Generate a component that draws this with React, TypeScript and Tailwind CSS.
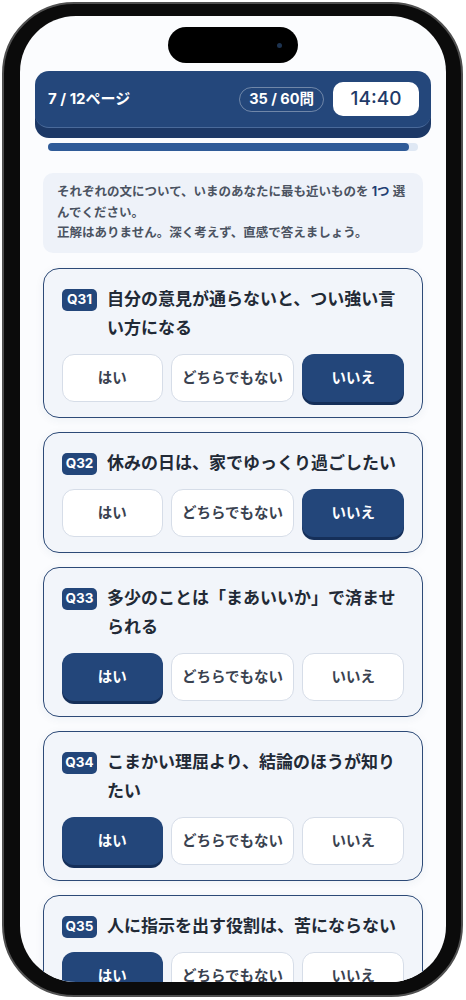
import React from 'react';

type Answer = 'yes' | 'neutral' | 'no';

interface Question {
  id: number;
  text: string;
  answer: Answer;
}

const questions: Question[] = [
  { id: 31, text: '自分の意見が通らないと、つい強い言い方になる', answer: 'no' },
  { id: 32, text: '休みの日は、家でゆっくり過ごしたい', answer: 'no' },
  { id: 33, text: '多少のことは「まあいいか」で済ませられる', answer: 'yes' },
  { id: 34, text: 'こまかい理屈より、結論のほうが知りたい', answer: 'yes' },
  { id: 35, text: '人に指示を出す役割は、苦にならない', answer: 'yes' },
];

const options: { key: Answer; label: string }[] = [
  { key: 'yes', label: 'はい' },
  { key: 'neutral', label: 'どちらでもない' },
  { key: 'no', label: 'いいえ' },
];

const QuestionCard: React.FC<{ q: Question }> = ({ q }) => (
  <div className="rounded-[16px] border border-[#2d4a77] bg-[#f2f5fa] px-[18px] pt-[16px] pb-[15px] shadow-[0_2px_10px_rgba(30,60,110,0.06)]">
    {/* Question */}
    <div className="flex items-start gap-[10px]">
      <span className="mt-[4px] flex h-[22px] w-[35px] shrink-0 items-center justify-center rounded-[5px] bg-[#23467a] text-[13.5px] font-bold text-white">
        Q{q.id}
      </span>
      <p className="text-[17px] font-bold leading-[29px] text-[#222a36]">{q.text}</p>
    </div>

    {/* Choices */}
    <div className="mt-[11px] grid grid-cols-[101fr_124fr_102fr] gap-[8px]">
      {options.map((o) => {
        const selected = o.key === q.answer;
        return (
          <button
            key={o.key}
            className={
              selected
                ? 'h-[48px] rounded-[12px] bg-[#23467a] text-[14.5px] font-bold text-white shadow-[0_3px_0_#152f59]'
                : 'h-[48px] rounded-[12px] border border-[#d6dde8] bg-white text-[14.5px] font-bold text-[#3a4250]'
            }
          >
            {o.label}
          </button>
        );
      })}
    </div>
  </div>
);

export default function App() {
  return (
    <div
      className="h-[1000px] w-[466px] overflow-hidden bg-white"
      style={{ fontFamily: 'Inter, "Noto Sans CJK JP", sans-serif' }}
    >
      {/* Phone frame */}
      <div className="ml-[2px] mt-[2px] h-[995px] w-[461px] rounded-[72px] border-[2px] border-[#505050] bg-[#0b0b0b] pl-[16px] pt-[12px]">
        {/* Screen */}
        <div className="flex h-[966px] w-[426px] flex-col overflow-hidden rounded-[56px] bg-[#fbfcfe]">
          {/* Dynamic island */}
          <div className="mx-auto mt-[11px] flex h-[36px] w-[130px] shrink-0 items-center justify-end rounded-full bg-black pr-[16px]">
            <span className="h-[5px] w-[5px] rounded-full bg-[#1d3350]" />
          </div>

          {/* Header */}
          <div className="mx-[15px] mt-[8px] flex h-[57px] shrink-0 items-center justify-between rounded-[14px] border-b border-[#4a6a9a] bg-[#24477b] pl-[13px] pr-[12px] shadow-[0_10px_0_#1c3866]">
            <span className="text-[15px] font-bold text-white">7 / 12ページ</span>
            <div className="flex items-center gap-[9px]">
              <span className="flex h-[25px] items-center rounded-full border border-white/35 px-[9px] text-[14.5px] font-bold text-white">
                35 / 60問
              </span>
              <span className="flex h-[34px] w-[86px] items-center justify-center rounded-[10px] bg-white text-[19px] font-medium text-[#1f3a68]">
                14:40
              </span>
            </div>
          </div>

          {/* Progress */}
          <div className="mx-[28px] mt-[15px] h-[8px] shrink-0 rounded-full bg-[#dfe8f4]">
            <div className="h-full rounded-full bg-[#2f5b98]" style={{ width: '97.5%' }} />
          </div>

          {/* Instruction */}
          <div className="mx-[23px] mt-[22px] shrink-0 rounded-[10px] bg-[#eef2f9] px-[14px] py-[9px] text-[12.5px] font-semibold leading-[20.5px] text-[#4b5361]">
            それぞれの文について、いまのあなたに最も近いものを <span className="font-bold text-[#1f3f73]">1つ</span> 選んでください。
            <br />
            正解はありません。深く考えず、直感で答えましょう。
          </div>

          {/* Questions */}
          <div className="mx-[23px] mt-[15px] flex flex-col gap-[14px]">
            {questions.map((q) => (
              <QuestionCard key={q.id} q={q} />
            ))}
          </div>
        </div>
      </div>
    </div>
  );
}
